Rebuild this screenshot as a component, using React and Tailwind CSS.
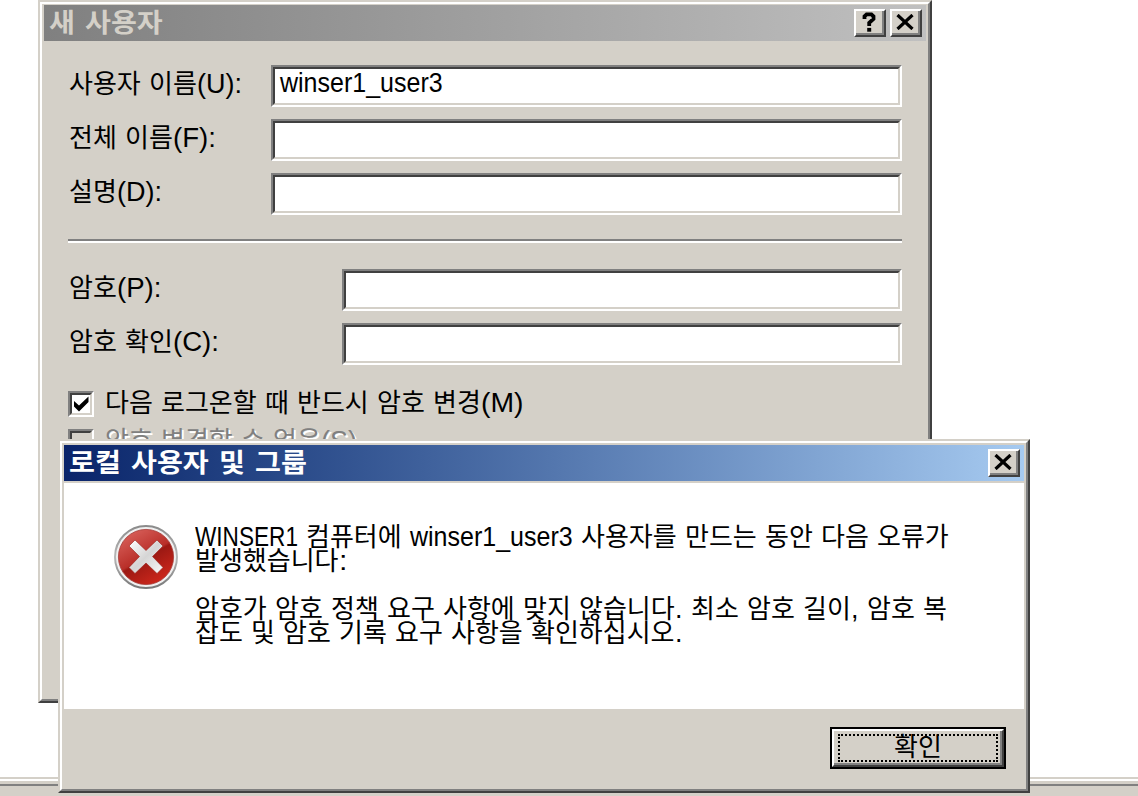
import { useLayoutEffect, useRef, useState } from "react";
import clsx from "clsx";

// advance widths of the non-hangul runs
const RUN_WIDTHS = {
  "(U):": 45,
  "(F):": 43,
  "(D):": 45,
  "(P):": 45,
  "(C):": 46,
  "(M)": 42,
  "(S)": 36,
  ":": 9,
  ".": 8,
  ",": 8,
  WINSER1: 103,
  winser1_user3: 163,
};

function Run({ text, bold }) {
  const ref = useRef(null);
  const [scale, setScale] = useState(1);
  const latin = text in RUN_WIDTHS;
  const width = latin ? RUN_WIDTHS[text] : text.length * (bold ? 26 : 24);

  useLayoutEffect(() => {
    setScale(width / ref.current.offsetWidth);
  }, [width]);

  return (
    <span className="inline-block" style={{ width }}>
      <span
        ref={ref}
        className={clsx(
          "inline-block origin-left whitespace-nowrap",
          latin
            ? "font-['Liberation_Sans','Noto_Sans_CJK_KR',sans-serif] text-[27px]"
            : "font-['Noto_Sans_CJK_KR',sans-serif] text-[26px]",
          bold && "font-bold"
        )}
        style={{ transform: `scaleX(${scale})` }}
      >
        {text}
      </span>
    </span>
  );
}

function Text({ children, bold, className }) {
  return (
    <span
      className={clsx(
        "flex h-6 items-baseline leading-6",
        bold ? "gap-2.5" : "gap-2",
        className
      )}
    >
      {children.split(" ").map((word, i) => (
        <span key={i} className="flex items-baseline">
          {word.match(/[가-힣]+|[^가-힣]+/g).map((part) => (
            <Run key={part} text={part} bold={bold} />
          ))}
        </span>
      ))}
    </span>
  );
}

function Window({ className, children }) {
  return (
    <div
      className={clsx(
        "absolute border-2 border-t-[#d4d0c8] border-r-[#404040] border-b-[#404040] border-l-[#d4d0c8]",
        className
      )}
    >
      <div className="h-full border-2 border-t-white border-r-[#808080] border-b-[#808080] border-l-white bg-[#d4d0c8]">
        {children}
      </div>
    </div>
  );
}

function TitleButton({ label, children }) {
  return (
    <button
      type="button"
      aria-label={label}
      className="h-7 w-8 border-2 border-t-white border-r-[#404040] border-b-[#404040] border-l-white"
    >
      <span className="flex h-full items-center justify-center border-r-2 border-b-2 border-[#808080] bg-[#d4d0c8]">
        {children}
      </span>
    </button>
  );
}

function CloseIcon() {
  return (
    <svg width="18" height="16" viewBox="0 0 18 16" fill="none" stroke="#000" strokeWidth="3.2">
      <path d="M1.5 1 L16.5 15 M16.5 1 L1.5 15" />
    </svg>
  );
}

function HelpIcon() {
  return (
    <svg width="14" height="20" viewBox="0 0 14 20" fill="none" stroke="#000">
      <path d="M2.5 7 V4.4 L4.6 2.4 H9.4 L11.5 4.4 V7 L7.2 10.8 V14" strokeWidth="3.8" />
      <path d="M5.2 17.8 H9.2" strokeWidth="3.8" />
    </svg>
  );
}

function Field({ value, className }) {
  return (
    <div
      className={clsx(
        "h-[42px] border-2 border-t-[#808080] border-r-white border-b-white border-l-[#808080]",
        className
      )}
    >
      <div className="h-full border-2 border-t-[#404040] border-r-[#d4d0c8] border-b-[#d4d0c8] border-l-[#404040] bg-white pt-0.5 pl-[5px]">
        {value && <Text>{value}</Text>}
      </div>
    </div>
  );
}

function FieldRow({ label, value, wide }) {
  return (
    <div className="flex h-[54px] items-start justify-between">
      <Text className="mt-[5px] ml-px">{label}</Text>
      <Field value={value} className={wide ? "w-[631px]" : "w-[560px]"} />
    </div>
  );
}

function Checkbox({ checked, disabled, children }) {
  return (
    <div className="flex h-[38px] items-start">
      <span className="h-[26px] w-[26px] border-2 border-t-[#808080] border-r-white border-b-white border-l-[#808080]">
        <span
          className={clsx(
            "flex h-full items-center justify-center border-2 border-t-[#404040] border-r-[#d4d0c8] border-b-[#d4d0c8] border-l-[#404040]",
            disabled ? "bg-[#d4d0c8]" : "bg-white"
          )}
        >
          {checked && (
            <svg className="shrink-0" width="15" height="16" viewBox="0 0 15 16" fill="#000">
              <path d="M0 5 L5 9.5 L14.5 0.5 V6 L5 15.5 L0 10.5 Z" />
            </svg>
          )}
        </span>
      </span>
      <Text
        className={clsx(
          "-mt-0.5 ml-[11px]",
          disabled && "text-[#808080] [text-shadow:2px_2px_0_#fff]"
        )}
      >
        {children}
      </Text>
    </div>
  );
}

function ErrorIcon() {
  return (
    <svg className="shrink-0" width="66" height="66" viewBox="0 0 66 66">
      <defs>
        <linearGradient id="ring" x1="0" y1="0" x2="0" y2="1">
          <stop offset="0" stopColor="#8b8b8b" />
          <stop offset="0.5" stopColor="#b8b8b8" />
          <stop offset="1" stopColor="#777" />
        </linearGradient>
        <linearGradient id="red" x1="0.2" y1="0" x2="0.8" y2="1">
          <stop offset="0" stopColor="#d9625c" />
          <stop offset="0.48" stopColor="#b92f29" />
          <stop offset="0.52" stopColor="#9c1913" />
          <stop offset="1" stopColor="#d4291d" />
        </linearGradient>
        <linearGradient id="cross" x1="0" y1="0" x2="1" y2="1">
          <stop offset="0" stopColor="#fff" />
          <stop offset="0.5" stopColor="#d5d5d5" />
          <stop offset="1" stopColor="#fafafa" />
        </linearGradient>
      </defs>
      <circle cx="33" cy="33" r="31" fill="#f0f0f0" stroke="url(#ring)" strokeWidth="2" />
      <circle cx="33" cy="33" r="27.6" fill="url(#red)" stroke="#a43a36" strokeWidth="0.8" />
      <path
        d="M22 16 L33 26.5 L44 16 L50 22 L39.5 32.5 L50 43.5 L44 49.5 L33 39 L22 49.5 L16 43.5 L26.5 32.5 L16 22 Z"
        fill="url(#cross)"
        stroke="#982019"
        strokeWidth="0.6"
        strokeLinejoin="round"
      />
    </svg>
  );
}

function NewUserWindow() {
  return (
    <Window className="top-0 left-[38px] h-[703px] w-[894px]">
      <div className="px-0.5 pt-px">
        <div className="flex h-9 items-center justify-between bg-linear-to-r from-[#808080] to-[#c0c0c0] pr-1 pl-[5px] text-[#d4d0c8]">
          <Text bold className="-mt-1">새 사용자</Text>
          <div className="flex gap-1 pb-px">
            <TitleButton label="도움말">
              <HelpIcon />
            </TitleButton>
            <TitleButton label="닫기">
              <CloseIcon />
            </TitleButton>
          </div>
        </div>
      </div>
      <div className="pt-6 pr-[26px] pl-[26px]">
        <FieldRow wide label="사용자 이름(U):" value="winser1_user3" />
        <FieldRow wide label="전체 이름(F):" />
        <FieldRow wide label="설명(D):" />
        <div className="mt-3 mb-[26px] h-1 border-t-2 border-b-2 border-t-[#808080] border-b-white" />
        <FieldRow label="암호(P):" />
        <FieldRow label="암호 확인(C):" />
        <div className="mt-3.5">
          <Checkbox checked>다음 로그온할 때 반드시 암호 변경(M)</Checkbox>
          <Checkbox disabled>암호 변경할 수 없음(S)</Checkbox>
        </div>
      </div>
    </Window>
  );
}

function ErrorWindow() {
  return (
    <Window className="top-[439px] left-[58px] h-[354px] w-[972px]">
      <div className="flex h-full flex-col px-0.5 pt-0.5">
        <div className="flex h-9 shrink-0 items-center justify-between bg-linear-to-r from-[#0a246a] to-[#a6caf0] pr-1 pl-[5px] text-white">
          <Text bold className="-mt-1">로컬 사용자 및 그룹</Text>
          <TitleButton label="닫기">
            <CloseIcon />
          </TitleButton>
        </div>
        <div className="mt-0.5 flex h-[226px] shrink-0 bg-white pt-[41px] pl-[49px]">
          <ErrorIcon />
          <div className="-mt-px ml-4">
            <Text>WINSER1 컴퓨터에 winser1_user3 사용자를 만드는 동안 다음 오류가</Text>
            <Text>발생했습니다:</Text>
            <Text className="mt-6">
              암호가 암호 정책 요구 사항에 맞지 않습니다. 최소 암호 길이, 암호 복
            </Text>
            <Text>잡도 및 암호 기록 요구 사항을 확인하십시오.</Text>
          </div>
        </div>
        <div className="flex justify-end pt-[18px] pr-[18px]">
          <button type="button" className="h-[42px] w-[176px] border-2 border-black">
            <span className="block h-full border-2 border-t-white border-r-[#404040] border-b-[#404040] border-l-white">
              <span className="block h-full border-r-2 border-b-2 border-[#808080] pt-[3px] pr-0.5 pl-1">
                <span className="flex h-7 justify-center border-2 border-dotted border-black">
                  <Text className="-mt-[3px]">확인</Text>
                </span>
              </span>
            </span>
          </button>
        </div>
      </div>
    </Window>
  );
}

export default function App() {
  return (
    <div className="relative flex h-[796px] w-[1138px] flex-col justify-end overflow-hidden bg-white text-black">
      <div className="h-[19px] border-t-2 border-[#d4d0c8] pt-0.5">
        <div className="h-full bg-[#d4d0c8] pt-[3px]">
          <div className="h-0.5 bg-[#808080]" />
        </div>
      </div>
      <NewUserWindow />
      <ErrorWindow />
    </div>
  );
}
